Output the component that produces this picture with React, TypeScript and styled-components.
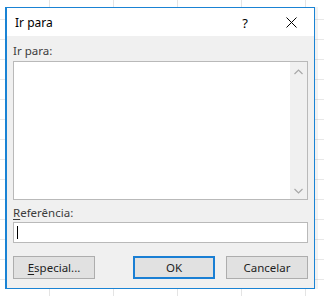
import React from "react";
import styled, { createGlobalStyle } from "styled-components";

const Global = createGlobalStyle`
  html, body { margin: 0; padding: 0; }
  body { font-family: "Noto Sans", "Segoe UI", Arial, sans-serif; }
`;

const Page = styled.div`
  width: 324px;
  height: 296px;
  overflow: hidden;
  background-color: #ffffff;
  background-image:
    repeating-linear-gradient(to right, transparent 0 49px, #e4e4e4 49px 50px, transparent 50px 64px),
    repeating-linear-gradient(to bottom, transparent 0 19px, #e8e8e8 19px 20px);
  display: flex;
  align-items: flex-start;
  padding: 7px 0 0 5px;
  box-sizing: border-box;
`;

const Dialog = styled.div`
  width: 310px;
  height: 282px;
  box-sizing: border-box;
  border: 1px solid #1a83d4;
  border-left-width: 2px;
  background: #f0f0f0;
  display: flex;
  flex-direction: column;
  box-shadow: 3px 0 0 rgba(0, 0, 0, 0.05);
`;

const TitleBar = styled.div`
  height: 28px;
  flex: none;
  background: #ffffff;
  display: flex;
  align-items: center;
  padding-left: 8px;
  padding-top: 1px;
  box-sizing: border-box;
  font-size: 12px;
  color: #000;
`;

const TitleText = styled.span`
  flex: 1;
`;

const TitleButton = styled.div<{ $w: number }>`
  width: ${(p) => p.$w}px;
  height: 27px;
  display: flex;
  align-items: center;
  justify-content: center;
  font-size: 13px;
  color: #000;
`;

const Body = styled.div`
  flex: 1;
  display: flex;
  flex-direction: column;
  padding: 6px 6px 0 6px;
`;

const Label = styled.div<{ $mt?: number }>`
  margin-top: ${(p) => p.$mt ?? 0}px;
  font-size: 11.5px;
  color: #3c3c3c;
  height: 17px;
  line-height: 17px;
`;

const Under = styled.span`
  text-decoration: underline;
  text-underline-offset: 2px;
`;

const ListBox = styled.div`
  margin-top: 2px;
  height: 139px;
  box-sizing: border-box;
  border: 1px solid #b9b9b9;
  background: #fff;
  display: flex;
  justify-content: flex-end;
`;

const ScrollBar = styled.div`
  width: 17px;
  background: #f0f0f0;
  display: flex;
  flex-direction: column;
  justify-content: space-between;
  align-items: center;
  padding: 7px 0 5px;
`;

const Input = styled.div`
  margin-top: 1px;
  height: 21px;
  box-sizing: border-box;
  border: 1px solid #b9b9b9;
  background: #fff;
  display: flex;
  align-items: center;
  padding-left: 3px;
`;

const Caret = styled.div`
  width: 1px;
  height: 13px;
  background: #000;
`;

const ButtonRow = styled.div`
  margin-top: 13px;
  display: flex;
`;

const Button = styled.div<{ $primary?: boolean; $gap?: number }>`
  width: 82px;
  height: 23px;
  box-sizing: border-box;
  margin-left: ${(p) => p.$gap ?? 0}px;
  background: #e1e1e1;
  border: 1px solid ${(p) => (p.$primary ? "#1a7fd4" : "#adadad")};
  box-shadow: ${(p) => (p.$primary ? "inset 0 0 0 1px #1a7fd4" : "none")};
  display: flex;
  align-items: center;
  justify-content: center;
  font-size: 11.5px;
  color: #1e1e1e;
`;

const Chevron = ({ up }: { up?: boolean }) => (
  <svg width="9" height="6" viewBox="0 0 9 6">
    <path
      d={up ? "M0.5 5 L4.5 1 L8.5 5" : "M0.5 1 L4.5 5 L8.5 1"}
      fill="none"
      stroke="#a8a8a8"
      strokeWidth="1.2"
    />
  </svg>
);

export default function App() {
  return (
    <>
      <Global />
      <Page>
        <Dialog>
          <TitleBar>
            <TitleText>Ir para</TitleText>
            <TitleButton $w={46}>?</TitleButton>
            <TitleButton $w={46}>
              <svg width="11" height="11" viewBox="0 0 11 11">
                <path d="M0.5 0.5 L10.5 10.5 M10.5 0.5 L0.5 10.5" stroke="#000" strokeWidth="1" />
              </svg>
            </TitleButton>
          </TitleBar>
          <Body>
            <Label>Ir para:</Label>
            <ListBox>
              <ScrollBar>
                <Chevron up />
                <Chevron />
              </ScrollBar>
            </ListBox>
            <Label $mt={4}>
              <Under>R</Under>eferência:
            </Label>
            <Input>
              <Caret />
            </Input>
            <ButtonRow>
              <Button>
                <span>
                  <Under>E</Under>special...
                </span>
              </Button>
              <Button $primary $gap={38}>OK</Button>
              <Button $gap={11}>Cancelar</Button>
            </ButtonRow>
          </Body>
        </Dialog>
      </Page>
    </>
  );
}
